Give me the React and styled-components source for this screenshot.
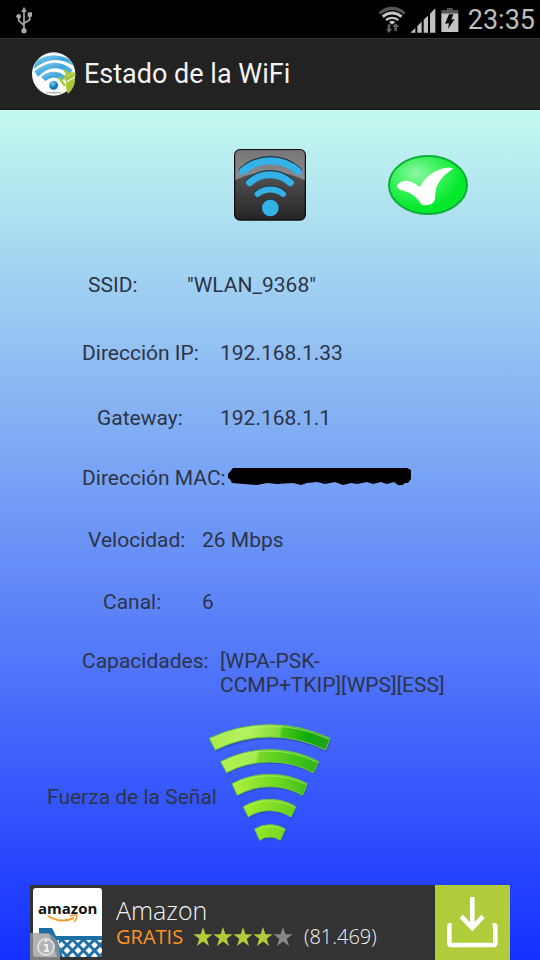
import React from 'react';
import styled, { createGlobalStyle } from 'styled-components';

const GlobalStyle = createGlobalStyle`
  * {
    box-sizing: border-box;
  }

  body {
    margin: 0;
    font-family: Roboto, 'Noto Sans', sans-serif;
  }
`;

const Screen = styled.div`
  display: flex;
  flex-direction: column;
  min-height: 100vh;
  background-color: #000;
`;

const StatusBar = styled.div`
  display: flex;
  align-items: center;
  justify-content: space-between;
  height: 38px;
  padding: 2px 5px 0 12px;
  color: #bebebe;
`;

const StatusIcons = styled.div`
  display: flex;
  align-items: center;
  gap: 1px;
`;

const Clock = styled.time`
  margin-left: 6px;
  font-size: 27px;
  line-height: 36px;
`;

const ActionBar = styled.header`
  display: flex;
  align-items: center;
  gap: 6px;
  height: 72px;
  padding-left: 30px;
  border-top: 1px solid #333;
  border-bottom: 1px solid #181818;
  background-color: #222;
`;

const Title = styled.h1`
  margin: 0;
  color: #f3f3f3;
  font-size: 27px;
  font-weight: 400;
  line-height: 32px;
`;

const Content = styled.main`
  display: flex;
  flex: 1;
  flex-direction: column;
  background: linear-gradient(#c4f9ee, #1430ff);
  color: #2c3446;
  font-size: 21px;
  line-height: 24px;
`;

const Badges = styled.div`
  display: grid;
  grid-template-columns: 1fr 72px 1fr;
  column-gap: 80px;
  align-items: center;
  padding-top: 39px;
`;

const WifiBadge = styled.svg`
  grid-column: 2;
  width: 72px;
  height: 72px;
`;

const Details = styled.dl`
  margin: 0;
  padding-top: 52px;
`;

const Row = styled.div`
  display: flex;
  min-height: ${(props) => props.$height || 62}px;
  padding-left: ${(props) => props.$indent}px;
`;

const Label = styled.dt`
  flex: none;
  width: ${(props) => props.$width}px;
  white-space: nowrap;
`;

const Value = styled.dd`
  margin: 0;
  white-space: pre-line;
`;

const SignalRow = styled.div`
  display: flex;
  align-items: center;
  padding: 18px 0 30px 47px;
`;

const SignalLabel = styled.span`
  flex: none;
  width: 153px;
  padding-top: 28px;
  white-space: nowrap;
`;

const Ad = styled.a`
  position: relative;
  display: flex;
  align-items: center;
  height: 75px;
  margin: auto 30px 0;
  background-color: #333;
  color: #f4f4f4;
  font-family: 'Open Sans', sans-serif;
  text-decoration: none;
`;

const AdLogo = styled.svg`
  flex: none;
  margin-left: 3px;
`;

const AdText = styled.div`
  flex: 1;
  padding-left: 14px;
`;

const AdName = styled.div`
  font-size: 25px;
  font-weight: 300;
  line-height: 28px;
`;

const AdRating = styled.div`
  display: flex;
  align-items: center;
  font-size: 20px;
  font-weight: 300;
  line-height: 26px;
`;

const Price = styled.span`
  width: 77px;
  color: #ff9326;
  font-weight: 400;
`;

const Reviews = styled.span`
  margin-left: 11px;
`;

const Download = styled.span`
  width: 75px;
  height: 75px;
  background-color: #b1cc3a;
`;

const InfoBadge = styled.svg`
  position: absolute;
  bottom: 0;
  left: 0;
`;

const UsbIcon = () => (
  <svg width="24" height="32" viewBox="34 14 72 96" fill="none" stroke="#a8a8a8" strokeWidth="5">
    <path d="M70 34V92M54 52V64L70 78M87 48V62L70 72" />
    <path d="M62 38L70 22L78 38Z" fill="#a8a8a8" stroke="none" />
    <circle cx="54" cy="51" r="7" fill="#a8a8a8" stroke="none" />
    <rect x="81" y="39" width="13" height="13" fill="#a8a8a8" stroke="none" />
    <circle cx="70" cy="94" r="8" fill="#a8a8a8" stroke="none" />
  </svg>
);

const WifiStatusIcon = () => (
  <svg width="30" height="30" viewBox="20 12 90 90" fill="none">
    <path d="M28 37Q65 7 103 37" stroke="#565656" strokeWidth="9" />
    <path d="M37 47Q65 25 94 47" stroke="#c4c4c4" strokeWidth="9" />
    <path d="M47 57Q65 44 84 57" stroke="#c4c4c4" strokeWidth="7" />
    <path d="M56 63Q65 55 75 63L65 71Z" fill="#c4c4c4" />
    <path d="M52 70H60V84H65L56 96L47 84H52ZM72 90H80V78H87L76 66L66 78H72Z" fill="#626262" />
  </svg>
);

const BarsIcon = () => (
  <svg width="28" height="30" viewBox="116 12 84 90" fill="#c0c0c0">
    <path d="M123 95L138 81V95ZM144 75L157 62V95H144ZM163 56L176 44V95H163ZM182 38L198 22V95H182Z" />
  </svg>
);

const BatteryIcon = () => (
  <svg width="24" height="30" viewBox="203 12 72 90">
    <path d="M216 27H233V21H250V27H267V37H216Z" fill="#555" />
    <path d="M216 37H267V93H216Z" fill="#c4c4c4" />
    <path d="M239 40H252L246 56L256 54L236 84L239 67L227 68Z" fill="#050505" />
  </svg>
);

const AppIcon = () => (
  <svg width="48" height="48" viewBox="30 32 144 144">
    <defs>
      <linearGradient id="appArc" x1="0" y1="0" x2="1" y2="1">
        <stop offset="0" stopColor="#8ed4ee" />
        <stop offset="0.5" stopColor="#3fa6dc" />
        <stop offset="1" stopColor="#65bbe4" />
      </linearGradient>
      <radialGradient id="appDot" cx="0.4" cy="0.3">
        <stop offset="0" stopColor="#7fd0f0" />
        <stop offset="1" stopColor="#0873b8" />
      </radialGradient>
      <clipPath id="appClip">
        <circle cx="101" cy="104" r="64" />
      </clipPath>
    </defs>
    <circle cx="101" cy="104" r="65" fill="#fdfdfd" />
    <g clipPath="url(#appClip)">
      <path d="M30 32H174V62Q100 22 30 62Z" fill="#c8cdd2" />
      <path d="M42 88Q100 40 162 80L158 66Q100 30 46 66Z" fill="url(#appArc)" />
      <path d="M54 112Q100 66 148 104L158 92Q103 46 43 96Z" fill="url(#appArc)" />
      <path d="M76 125Q101 104 126 125L138 112Q101 82 63 112Z" fill="url(#appArc)" />
      <ellipse cx="102" cy="160" rx="26" ry="3" fill="#bbb" />
    </g>
    <circle cx="101" cy="138" r="13" fill="url(#appDot)" />
    <g fill="#a5c936">
      <path d="M132 116Q134 98 152 98Q164 98 166 104V111L136 127Z" />
      <path d="M137 130L165 115Q168 140 145 163L140 157Z" />
      <path d="M118 116L133 137M139 99L135 94" stroke="#a5c936" strokeWidth="7" strokeLinecap="round" />
      <circle cx="145" cy="108" r="2" fill="#fff" />
      <circle cx="156" cy="103" r="2" fill="#fff" />
    </g>
  </svg>
);

const WifiIcon = () => (
  <WifiBadge viewBox="41 27 216 216">
    <defs>
      <linearGradient id="tile" x1="0" y1="0" x2="0" y2="1">
        <stop offset="0" stopColor="#686868" />
        <stop offset="0.5" stopColor="#484848" />
        <stop offset="1" stopColor="#252525" />
      </linearGradient>
      <linearGradient id="gloss" x1="0" y1="0" x2="0" y2="1">
        <stop offset="0" stopColor="#777" />
        <stop offset="1" stopColor="#8c8c8c" />
      </linearGradient>
    </defs>
    <rect x="43" y="29" width="212" height="211" rx="16" fill="url(#tile)" stroke="#111" strokeWidth="4" />
    <path d="M45 120V46Q45 31 60 31H238Q253 31 253 46V120Q150 70 45 120Z" fill="url(#gloss)" />
    <g fill="none" strokeLinecap="round">
      <g stroke="#1f3440">
        <path d="M67 91A126 126 0 0 1 233 91" strokeWidth="23" />
        <path d="M88 125A90 90 0 0 1 210 125" strokeWidth="22" />
        <path d="M112 159A61 61 0 0 1 188 159" strokeWidth="19" />
      </g>
      <g stroke="#34b1e6">
        <path d="M67 94A126 126 0 0 1 233 94" strokeWidth="22" />
        <path d="M88 128A90 90 0 0 1 210 128" strokeWidth="21" />
        <path d="M112 162A61 61 0 0 1 188 162" strokeWidth="18" />
      </g>
    </g>
    <circle cx="150" cy="202" r="26" fill="#1f3440" />
    <circle cx="150" cy="204" r="25" fill="#34b1e6" />
  </WifiBadge>
);

const CheckIcon = () => (
  <svg width="84" height="62" viewBox="18 27 252 186">
    <defs>
      <radialGradient id="checkFill" cx="0.35" cy="0.3" r="0.6">
        <stop offset="0" stopColor="#8cf8a4" />
        <stop offset="0.5" stopColor="#3df25e" />
        <stop offset="1" stopColor="#04e92c" />
      </radialGradient>
    </defs>
    <ellipse cx="144" cy="120" rx="117" ry="87" fill="url(#checkFill)" stroke="#0cac3a" strokeWidth="6" />
    <path
      d="M51 122C56 111 74 105 86 108C101 112 110 119 120 126C130 105 150 83 181 73C196 68 212 67 220 71C202 82 181 99 171 123C163 141 170 166 158 174C148 181 129 184 123 176C113 160 102 151 88 143C74 136 53 137 51 122Z"
      fill="#fff"
    />
  </svg>
);

const Redacted = () => (
  <svg width="186" height="24" viewBox="0 0 186 24" role="img" aria-label="Oculto">
    <path
      d="M1 8L6 2H180L184 4V13L181 17H178Q176 20 171 19L167 16L160 18L154 16L146 18L140 16L130 18L124 17L116 19L108 16L98 18L90 16L80 17L74 19L66 17L50 18L40 17L30 19L5 17L3 13L1 12Z"
      fill="#000"
    />
  </svg>
);

const SignalIcon = () => (
  <svg width="140" height="135" viewBox="0 0 420 405">
    <defs>
      <linearGradient id="bandTop" gradientUnits="userSpaceOnUse" x1="28" y1="50" x2="385" y2="110">
        <stop offset="0" stopColor="#a9e94a" />
        <stop offset="0.3" stopColor="#b6f25e" />
        <stop offset="0.57" stopColor="#84dc38" />
        <stop offset="0.6" stopColor="#46c51a" />
        <stop offset="0.82" stopColor="#11a80c" />
        <stop offset="1" stopColor="#25a31d" />
      </linearGradient>
      <linearGradient id="bandSecond" gradientUnits="userSpaceOnUse" x1="62" y1="120" x2="355" y2="170">
        <stop offset="0" stopColor="#b1f34c" />
        <stop offset="0.35" stopColor="#a4ec54" />
        <stop offset="0.39" stopColor="#78d925" />
        <stop offset="0.75" stopColor="#42c51a" />
        <stop offset="1" stopColor="#2fb11b" />
      </linearGradient>
      <linearGradient id="bandThird" gradientUnits="userSpaceOnUse" x1="96" y1="0" x2="322" y2="0">
        <stop offset="0" stopColor="#aff03b" />
        <stop offset="0.6" stopColor="#6fd921" />
        <stop offset="1" stopColor="#3dbd18" />
      </linearGradient>
      <linearGradient id="bandLow" gradientUnits="userSpaceOnUse" x1="130" y1="0" x2="288" y2="0">
        <stop offset="0" stopColor="#a4ee2c" />
        <stop offset="1" stopColor="#62d11c" />
      </linearGradient>
    </defs>
    <g transform="translate(3 4)" fill="#1b3b8c" opacity="0.45">
      <path d="M28 70A420 420 0 0 1 390 70L377 107A370 370 0 0 0 46 107Z" />
      <path d="M62 140A318 318 0 0 1 357 140L339 173A280 280 0 0 0 80 173Z" />
      <path d="M96 206A242 242 0 0 1 322 206L308 242A198 198 0 0 0 112 242Z" />
      <path d="M130 275A153 153 0 0 1 288 275L273 306A117 117 0 0 0 145 306Z" />
      <path d="M164 342A88 88 0 0 1 256 342L241 376A53 53 0 0 0 179 376Z" />
    </g>
    <g stroke="#6cc73c" strokeWidth="3" strokeLinejoin="round">
      <path d="M28 70A420 420 0 0 1 390 70L377 105A370 370 0 0 0 46 105Z" fill="url(#bandTop)" />
      <path d="M62 140A318 318 0 0 1 357 140L340 173A280 280 0 0 0 80 173Z" fill="url(#bandSecond)" />
      <path d="M96 206A242 242 0 0 1 322 206L308 241A198 198 0 0 0 112 241Z" fill="url(#bandThird)" />
      <path d="M130 275A153 153 0 0 1 288 275L273 306A117 117 0 0 0 145 306Z" fill="url(#bandLow)" />
      <path d="M164 342A88 88 0 0 1 256 342L241 376A53 53 0 0 0 179 376Z" fill="url(#bandLow)" />
    </g>
    <g fill="none" stroke="#c6f48c" strokeWidth="3" opacity="0.6">
      <path d="M33 72A420 420 0 0 1 385 72" />
      <path d="M67 142A318 318 0 0 1 352 142" />
      <path d="M101 208A242 242 0 0 1 317 208" />
      <path d="M135 277A153 153 0 0 1 283 277" />
      <path d="M169 344A88 88 0 0 1 251 344" />
    </g>
  </svg>
);

const AmazonLogo = () => (
  <AdLogo width="69" height="69" viewBox="0 0 69 69">
    <defs>
      <pattern id="basket" width="11" height="11" patternUnits="userSpaceOnUse" x="1" y="2">
        <path d="M0 0L11 11M11 0L0 11" stroke="#1d6fa5" strokeWidth="3" />
      </pattern>
      <clipPath id="logoClip">
        <rect width="69" height="69" rx="3" />
      </clipPath>
    </defs>
    <g clipPath="url(#logoClip)">
      <rect width="69" height="69" fill="#fff" />
      <path d="M25 50H69V69H29Z" fill="url(#basket)" />
      <path d="M6 40H19L23 48H69V52H24L30 69H24L16 46H6Z" fill="#1d6fa5" />
    </g>
    <text x="5" y="26" fontSize="15" fontWeight="700" fontFamily="Open Sans, sans-serif" fill="#111">
      amazon
    </text>
    <path d="M15 28Q28 36 41 30" fill="none" stroke="#f19a2a" strokeWidth="2" />
    <path d="M37 28Q43 26 44 28Q44 31 41 34" fill="none" stroke="#f19a2a" strokeWidth="1.5" />
  </AdLogo>
);

const Star = ({ filled }) => (
  <svg width="20" height="20" viewBox="0 0 20 20" aria-hidden="true">
    <path
      d="M10 0L12.4 7.2H19.6L13.8 11.7L16 19L10 14.6L4 19L6.2 11.7L0.4 7.2H7.6Z"
      fill={filled ? '#b1cc3a' : '#858789'}
    />
  </svg>
);

const DownloadIcon = () => (
  <svg width="75" height="75" viewBox="45 15 225 225" fill="none" stroke="#fff">
    <path d="M157 51V148M124 109L157 144L189 109" strokeWidth="14" />
    <path d="M95 136H90Q88 136 88 141V188Q88 195 95 195H219Q226 195 226 188V141Q226 136 224 136H218" strokeWidth="14" />
  </svg>
);

const details = [
  { label: 'SSID:', value: '"WLAN_9368"', indent: 88, width: 99, height: 68 },
  { label: 'Dirección IP:', value: '192.168.1.33', indent: 82, width: 138, height: 65 },
  { label: 'Gateway:', value: '192.168.1.1', indent: 97, width: 123, height: 60 },
  { label: 'Dirección MAC:', value: <Redacted />, indent: 82, width: 145 },
  { label: 'Velocidad:', value: '26 Mbps', indent: 88, width: 114 },
  { label: 'Canal:', value: '6', indent: 103, width: 99, height: 59 },
  { label: 'Capacidades:', value: '[WPA-PSK-\nCCMP+TKIP][WPS][ESS]', indent: 82, width: 138, height: 48 },
];

const App = () => {
  return (
    <Screen>
      <GlobalStyle />
      <StatusBar>
        <UsbIcon />
        <StatusIcons>
          <WifiStatusIcon />
          <BarsIcon />
          <BatteryIcon />
          <Clock>23:35</Clock>
        </StatusIcons>
      </StatusBar>
      <ActionBar>
        <AppIcon />
        <Title>Estado de la WiFi</Title>
      </ActionBar>
      <Content>
        <Badges>
          <WifiIcon />
          <CheckIcon />
        </Badges>
        <Details>
          {details.map((item) => (
            <Row key={item.label} $indent={item.indent} $height={item.height}>
              <Label $width={item.width}>{item.label}</Label>
              <Value>{item.value}</Value>
            </Row>
          ))}
        </Details>
        <SignalRow>
          <SignalLabel>Fuerza de la Señal</SignalLabel>
          <SignalIcon />
        </SignalRow>
        <Ad href="#amazon">
          <AmazonLogo />
          <AdText>
            <AdName>Amazon</AdName>
            <AdRating>
              <Price>GRATIS</Price>
              {[1, 2, 3, 4, 5].map((n) => (
                <Star key={n} filled={n <= 4} />
              ))}
              <Reviews>(81.469)</Reviews>
            </AdRating>
          </AdText>
          <Download>
            <DownloadIcon />
          </Download>
          <InfoBadge width="30" height="27" viewBox="0 0 30 27">
            <path d="M0 0H18Q30 4 30 27H0Z" fill="#9a9a9a" opacity="0.75" />
            <circle cx="16" cy="14" r="8" fill="none" stroke="#ddd" strokeWidth="2" />
            <path d="M14 12H17V18M14 18H19M15 8H17" fill="none" stroke="#eee" strokeWidth="2" />
          </InfoBadge>
        </Ad>
      </Content>
    </Screen>
  );
};

export default App;
